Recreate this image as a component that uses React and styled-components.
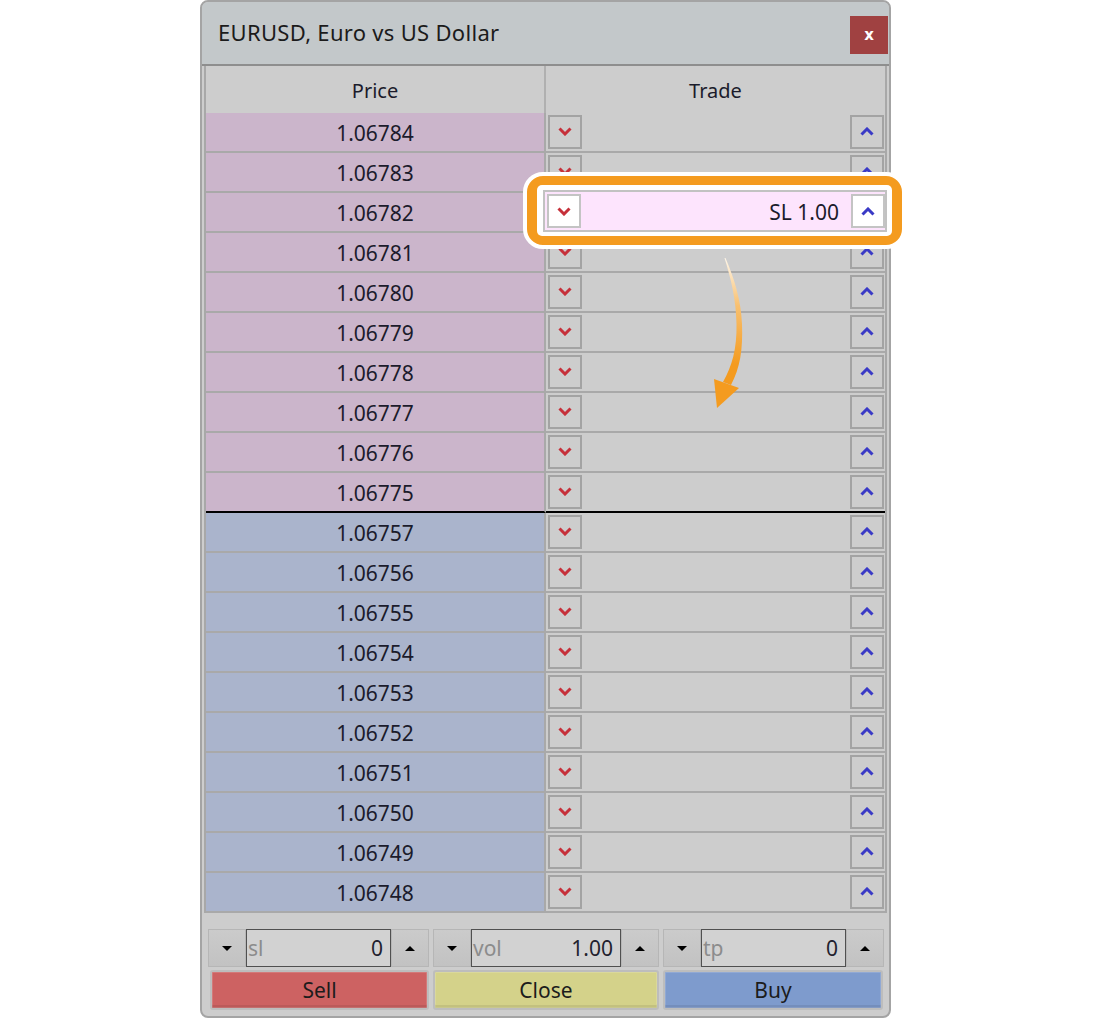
import React from 'react';
import styled, { createGlobalStyle } from 'styled-components';

const askPrices = ['1.06784', '1.06783', '1.06782', '1.06781', '1.06780', '1.06779', '1.06778', '1.06777', '1.06776', '1.06775'];
const bidPrices = ['1.06757', '1.06756', '1.06755', '1.06754', '1.06753', '1.06752', '1.06751', '1.06750', '1.06749', '1.06748'];

const GlobalStyle = createGlobalStyle`
  body {
    margin: 0;
    background: #ffffff;
    font-family: "Noto Sans", "Open Sans", sans-serif;
  }
`;

const Page = styled.div`
  padding-left: 200px;
  width: 1100px;
  height: 1018px;
  box-sizing: border-box;
`;

const Window = styled.div`
  position: relative;
  width: 691px;
  height: 1018px;
  box-sizing: border-box;
  border: 2px solid #a4a4a4;
  border-radius: 8px;
  background: #cdcdcd;
  display: flex;
  flex-direction: column;
`;

const TitleBar = styled.div`
  height: 64px;
  flex-shrink: 0;
  box-sizing: border-box;
  background: #c3c8ca;
  border-bottom: 2px solid #8e8e8e;
  border-radius: 6px 6px 0 0;
  display: flex;
  align-items: flex-start;
  justify-content: space-between;
  padding: 14px 1px 0 16px;
`;

const Title = styled.div`
  font-size: 22px;
  color: #1b1b1b;
  line-height: 34px;
  margin-top: -1px;
  letter-spacing: 0.3px;
`;

const CloseButton = styled.div`
  width: 38px;
  height: 38px;
  background: #a04141;
  color: #ffffff;
  font-family: "DejaVu Sans", sans-serif;
  font-weight: bold;
  font-size: 15px;
  display: flex;
  align-items: center;
  justify-content: center;
`;

const Table = styled.div`
  margin: 0 2px;
  border-left: 2px solid #a8a8a8;
  border-right: 2px solid #a8a8a8;
  display: grid;
  grid-template-columns: 340px 1fr;
  font-size: 21px;
  color: #1b1b2b;
`;

const HeaderCell = styled.div`
  height: 47px;
  display: flex;
  align-items: center;
  justify-content: center;
  background: #cdcdcd;
  border-right: ${p => (p.$first ? '2px solid #b0b0b0' : 'none')};
  padding-top: 1px;
  box-sizing: border-box;
  font-size: 20px;
`;

const PriceCell = styled.div`
  height: 40px;
  box-sizing: border-box;
  background: ${p => (p.$ask ? '#cbb5cb' : '#aab4cc')};
  border-bottom: 2px solid ${p => (p.$split ? '#000000' : '#a9a9a9')};
  border-right: 2px solid #a9a9a9;
  display: flex;
  align-items: center;
  justify-content: center;
  padding-top: 2px;
`;

const TradeCell = styled.div`
  height: 40px;
  box-sizing: border-box;
  background: #cdcdcd;
  border-bottom: 2px solid ${p => (p.$split ? '#000000' : '#a9a9a9')};
  display: flex;
  align-items: center;
  justify-content: space-between;
  padding: 0 1px 1px 2px;
`;

const ArrowButton = styled.div`
  width: 34px;
  height: 34px;
  box-sizing: border-box;
  border: 2px solid ${p => (p.$light ? '#c4c4c4' : '#a3a3a3')};
  background: ${p => (p.$light ? '#ffffff' : 'transparent')};
  display: flex;
  align-items: center;
  justify-content: center;
`;

const Chevron = ({ up }) => (
  <svg width="14" height="9" viewBox="0 0 14 9">
    <polyline
      points={up ? '1.5,7.5 7,2 12.5,7.5' : '1.5,1.5 7,7 12.5,1.5'}
      fill="none"
      stroke={up ? '#3a3ac6' : '#c6303a'}
      strokeWidth="3"
    />
  </svg>
);

const BottomPanel = styled.div`
  margin: 0 2px;
  padding: 16px 0 0 4px;
  display: grid;
  grid-template-columns: 221px 226px 221px;
  column-gap: 4px;
  row-gap: 3px;
`;

const Spin = styled.div`
  height: 38px;
  display: flex;
`;

const SpinButton = styled.div`
  width: 38px;
  flex-shrink: 0;
  box-sizing: border-box;
  border: 1px solid #b6b6b6;
  background: linear-gradient(#cbcbcb, #c2c2c2);
  display: flex;
  align-items: center;
  justify-content: center;
`;

const Triangle = styled.div`
  width: 0;
  height: 0;
  border-left: 5px solid transparent;
  border-right: 5px solid transparent;
  ${p => (p.$up ? 'border-bottom: 5px solid #000;' : 'border-top: 5px solid #000;')}
`;

const SpinInput = styled.div`
  flex: 1;
  box-sizing: border-box;
  border: 1px solid #505050;
  background: #d2d2d2;
  display: flex;
  align-items: center;
  justify-content: space-between;
  padding: 0 7px 1px 1px;
  font-size: 21px;
`;

const SpinLabel = styled.span`
  color: #8c8c8c;
`;

const SpinValue = styled.span`
  color: #22222e;
`;

const ActionButton = styled.div`
  height: 40px;
  box-sizing: border-box;
  border: 2px solid #bdbdbd;
  border-radius: 3px;
  margin-left: ${p => (p.$first ? '2px' : '0')};
  margin-right: ${p => (p.$last ? '1px' : '0')};
  background: ${p => p.$color};
  box-shadow: inset 0 -3px 0 rgba(0, 0, 0, 0.08), inset 0 0 0 1px rgba(255, 255, 255, 0.15);
  display: flex;
  align-items: center;
  justify-content: center;
  font-size: 21px;
  color: #1c1c1c;
  padding-bottom: 1px;
`;

const Highlight = styled.div`
  position: absolute;
  left: 321px;
  top: 170px;
  width: 383px;
  height: 77px;
  box-sizing: border-box;
  border: 4px solid #ffffff;
  border-radius: 20px;
  background: #f49b1f;
  padding: 9px 10px;
`;

const HighlightInner = styled.div`
  height: 100%;
  box-sizing: border-box;
  background: #ffffff;
  border-radius: 5px;
  padding: 5px 5px 4px 6px;
`;

const HighlightRow = styled.div`
  height: 100%;
  box-sizing: border-box;
  border: 2px solid #c2c2c2;
  background: #fde4fd;
  display: flex;
  align-items: center;
  justify-content: space-between;
  padding: 0 0 0 2px;
  font-size: 21px;
  color: #1b1b2b;
`;

const SlText = styled.span`
  margin-left: auto;
  margin-right: 12px;
  padding-top: 1px;
`;

const FlowArrow = styled.svg`
  position: absolute;
  left: 498px;
  top: 252px;
`;

export default function App() {
  const rows = [
    ...askPrices.map(p => ({ price: p, ask: true })),
    ...bidPrices.map(p => ({ price: p, ask: false })),
  ];

  return (
    <Page>
      <GlobalStyle />
      <Window>
        <TitleBar>
          <Title>EURUSD, Euro vs US Dollar</Title>
          <CloseButton>x</CloseButton>
        </TitleBar>

        <Table>
          <HeaderCell $first>Price</HeaderCell>
          <HeaderCell>Trade</HeaderCell>
          {rows.map((r, i) => (
            <React.Fragment key={r.price}>
              <PriceCell $ask={r.ask} $split={i === 9}>{r.price}</PriceCell>
              <TradeCell $split={i === 9}>
                <ArrowButton><Chevron /></ArrowButton>
                <ArrowButton><Chevron up /></ArrowButton>
              </TradeCell>
            </React.Fragment>
          ))}
        </Table>

        <BottomPanel>
          {[['sl', '0'], ['vol', '1.00'], ['tp', '0']].map(([label, value]) => (
            <Spin key={label}>
              <SpinButton><Triangle /></SpinButton>
              <SpinInput>
                <SpinLabel>{label}</SpinLabel>
                <SpinValue>{value}</SpinValue>
              </SpinInput>
              <SpinButton><Triangle $up /></SpinButton>
            </Spin>
          ))}
          <ActionButton $first $color="#cd6262">Sell</ActionButton>
          <ActionButton $color="#d4d28a">Close</ActionButton>
          <ActionButton $last $color="#7e9bcd">Buy</ActionButton>
        </BottomPanel>

        <Highlight>
          <HighlightInner>
            <HighlightRow>
              <ArrowButton $light><Chevron /></ArrowButton>
              <SlText>SL 1.00</SlText>
              <ArrowButton $light><Chevron up /></ArrowButton>
            </HighlightRow>
          </HighlightInner>
        </Highlight>

        <FlowArrow width="50" height="160" viewBox="0 0 50 160">
          <defs>
            <linearGradient id="arrowFade" x1="0" y1="4" x2="0" y2="110" gradientUnits="userSpaceOnUse">
              <stop offset="0" stopColor="#fff6e8" />
              <stop offset="0.45" stopColor="#f8c070" />
              <stop offset="1" stopColor="#f49b1f" />
            </linearGradient>
          </defs>
          <path
            d="M24.5 4 C31 25 36 45 36.5 70 C37 95 32 112 23 128 L31 131 C40 114 43 96 42 70 C41 45 34 24 25.5 4 Z"
            fill="url(#arrowFade)"
          />
          <polygon points="14,125 39,134 17,154" fill="#f49b1f" />
        </FlowArrow>
      </Window>
    </Page>
  );
}
